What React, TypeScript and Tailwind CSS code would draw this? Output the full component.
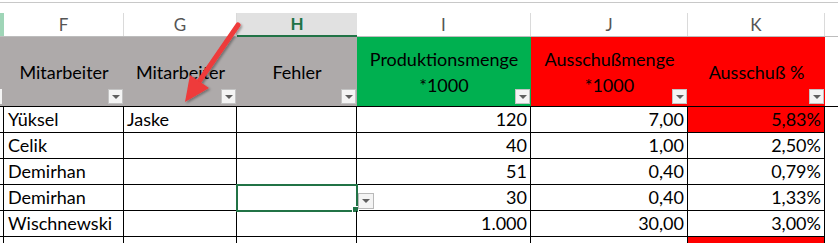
const cols = [
  { key: 'E', w: 'w-[4px]' },
  { key: 'F', w: 'w-[120px]' },
  { key: 'G', w: 'w-[113px]' },
  { key: 'H', w: 'w-[120px]' },
  { key: 'I', w: 'w-[174px]' },
  { key: 'J', w: 'w-[157px]' },
  { key: 'K', w: 'w-[137px]' },
];

const rows = [
  { name: 'Yüksel', g: 'Jaske', menge: '120', aus: '7,00', pct: '5,83%', bad: true },
  { name: 'Celik', g: '', menge: '40', aus: '1,00', pct: '2,50%', bad: false },
  { name: 'Demirhan', g: '', menge: '51', aus: '0,40', pct: '0,79%', bad: false },
  { name: 'Demirhan', g: '', menge: '30', aus: '0,40', pct: '1,33%', bad: false, active: true },
  { name: 'Wischnewski', g: '', menge: '1.000', aus: '30,00', pct: '3,00%', bad: false },
];

function FilterButton() {
  return (
    <div className="absolute right-[1px] bottom-[2px] w-[15px] h-[15px] bg-[#f4f4f4] border border-[#c3c3c3] flex items-center justify-center">
      <div className="w-0 h-0 border-l-[4px] border-r-[4px] border-t-[4px] border-l-transparent border-r-transparent border-t-[#5f5f5f]" />
    </div>
  );
}

function HeaderCell({ w, bg, lines }: { w: string; bg: string; lines: string[] }) {
  return (
    <div className={`${w} ${bg} relative h-full flex flex-col items-center justify-center leading-[26px] text-black`}>
      {lines.map((l) => (
        <span key={l}>{l}</span>
      ))}
      <FilterButton />
    </div>
  );
}

export default function App() {
  return (
    <div
      className="relative w-[838px] h-[243px] bg-white overflow-hidden text-[18px]"
      style={{ fontFamily: 'Lato, "Open Sans", sans-serif' }}
    >
      <div className="h-[2px]" />
      <div className="h-[1px] bg-[#c8c8c8]" />
      <div className="h-[10px]" />

      {/* column letters */}
      <div className="flex h-[24px] border-b border-[#bdbdbd] text-[17px]">
        {cols.map((c) =>
          c.key === 'E' ? (
            <div key={c.key} className="w-[4px] bg-[#9fd5b7]" />
          ) : c.key === 'H' ? (
            <div
              key={c.key}
              className={`${c.w} bg-[#e1e1e1] border-b-2 border-[#217346] -mb-[1px] flex items-center justify-center font-bold text-[#217346]`}
            >
              {c.key}
            </div>
          ) : (
            <div
              key={c.key}
              className={`${c.w} border-r border-[#dadada] flex items-center justify-center text-[#555]`}
            >
              {c.key}
            </div>
          )
        )}
        <div className="flex-1" />
      </div>

      {/* table header */}
      <div className="flex h-[70px] border-b border-black">
        <div className="w-[4px] bg-[#aeaaaa] relative">
          <div className="absolute left-0 bottom-[2px] w-[2px] h-[15px] bg-[#f4f4f4]" />
        </div>
        <HeaderCell w="w-[120px]" bg="bg-[#aeaaaa]" lines={['Mitarbeiter']} />
        <HeaderCell w="w-[113px]" bg="bg-[#aeaaaa]" lines={['Mitarbeiter']} />
        <HeaderCell w="w-[120px]" bg="bg-[#aeaaaa]" lines={['Fehler']} />
        <HeaderCell w="w-[174px]" bg="bg-[#00b050]" lines={['Produktionsmenge', '*1000']} />
        <HeaderCell w="w-[157px]" bg="bg-[#ff0000]" lines={['Ausschußmenge', '*1000']} />
        <HeaderCell w="w-[137px]" bg="bg-[#ff0000]" lines={['Ausschuß %']} />
        <div className="flex-1" />
      </div>

      {/* data rows */}
      {rows.map((r, i) => (
        <div key={i} className="flex h-[26px] leading-[25px] text-black">
          <div className="w-[4px] border-r border-b border-black" />
          <div className="w-[120px] border-r border-b border-black pl-[4px] whitespace-nowrap">{r.name}</div>
          <div className="w-[113px] border-r border-b border-black pl-[3px]">{r.g}</div>
          <div className="w-[120px] border-r border-b border-black relative">
            {r.active && (
              <>
                <div className="absolute -left-[1px] -top-[1px] w-[122px] h-[28px] border-2 border-[#217346]" />
                <div className="absolute -right-[3px] -bottom-[3px] w-[5px] h-[5px] bg-[#217346] border border-white box-content" />
                <div className="absolute -right-[18px] top-[8px] w-[16px] h-[16px] bg-[#f4f4f4] border border-[#b9b9b9] flex items-center justify-center">
                  <div className="w-0 h-0 border-l-[4px] border-r-[4px] border-t-[4px] border-l-transparent border-r-transparent border-t-[#5f5f5f]" />
                </div>
              </>
            )}
          </div>
          <div className="w-[174px] border-r border-b border-black text-right pr-[3px]">{r.menge}</div>
          <div className="w-[157px] border-r border-b border-black text-right pr-[3px]">{r.aus}</div>
          <div className={`w-[137px] border-r border-b border-black text-right pr-[3px] ${r.bad ? 'bg-[#ff0000]' : ''}`}>
            {r.pct}
          </div>
          <div className="flex-1" />
        </div>
      ))}

      {/* partial next row */}
      <div className="flex h-[26px]">
        <div className="w-[4px] border-r border-black" />
        <div className="w-[120px] border-r border-black" />
        <div className="w-[113px] border-r border-black" />
        <div className="w-[120px] border-r border-black" />
        <div className="w-[174px] border-r border-black" />
        <div className="w-[157px] border-r border-black" />
        <div className="w-[137px] border-r border-black bg-[#ff0000]" />
        <div className="flex-1" />
      </div>

      {/* annotation arrow */}
      <svg className="absolute left-0 top-0 pointer-events-none" width="838" height="243" viewBox="0 0 838 243">
        <defs>
          <filter id="arrowShadow" x="-20%" y="-20%" width="140%" height="140%">
            <feDropShadow dx="1.5" dy="1.5" stdDeviation="1.2" floodColor="#000" floodOpacity="0.35" />
          </filter>
        </defs>
        <g filter="url(#arrowShadow)">
          <line x1="238" y1="25" x2="198" y2="83" stroke="#ee3a3a" strokeWidth="5" strokeLinecap="round" />
          <polygon points="185,102 190,75 209,88" fill="#ee3a3a" />
        </g>
      </svg>
    </div>
  );
}
